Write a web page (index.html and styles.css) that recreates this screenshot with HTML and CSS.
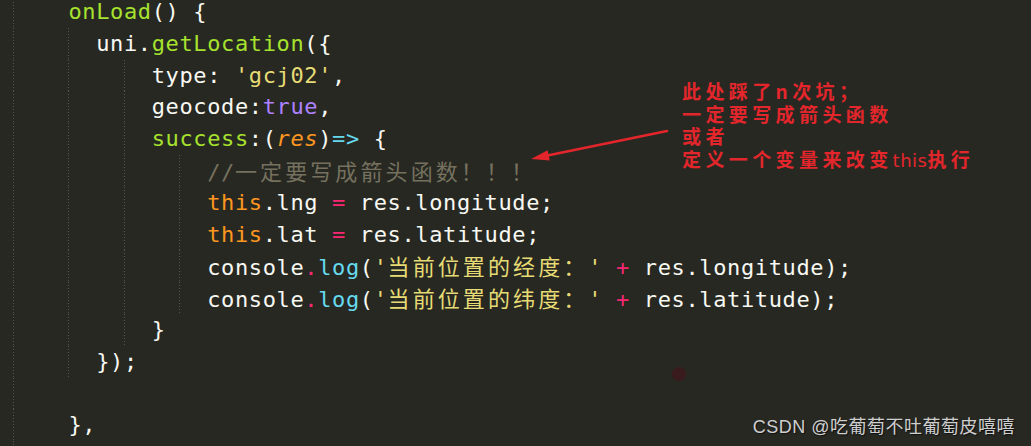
FILE: index.html
```html
<!DOCTYPE html>
<html lang="zh">
<head>
<meta charset="utf-8">
<title>onLoad getLocation</title>
<link rel="stylesheet" href="styles.css">
</head>
<body>
<div class="page">
  <div class="editor">
    <div class="line"><span class="g">    </span><span class="fn">onLoad</span>() {</div>
    <div class="line"><span class="g">    </span><span class="g">  </span>uni.<span class="fn">getLocation</span>({</div>
    <div class="line"><span class="g">    </span><span class="g">    </span><span class="g">  </span>type: <span class="str">'gcj02'</span>,</div>
    <div class="line"><span class="g">    </span><span class="g">    </span><span class="g">  </span>geocode:<span class="con">true</span>,</div>
    <div class="line"><span class="g">    </span><span class="g">    </span><span class="g">  </span><span class="fn">success</span>:(<span class="arg">res</span>)<span class="kw">=&gt;</span> {</div>
    <div class="line"><span class="g">    </span><span class="g">    </span><span class="g">    </span><span class="g">  </span><span class="cmt">//<span class="cjk">一定要写成箭头函数！！！</span></span></div>
    <div class="line"><span class="g">    </span><span class="g">    </span><span class="g">    </span><span class="g">  </span><span class="this">this</span>.lng <span class="op">=</span> res.longitude;</div>
    <div class="line"><span class="g">    </span><span class="g">    </span><span class="g">    </span><span class="g">  </span><span class="this">this</span>.lat <span class="op">=</span> res.latitude;</div>
    <div class="line"><span class="g">    </span><span class="g">    </span><span class="g">    </span><span class="g">  </span>console<span class="op">.</span><span class="kw">log</span>(<span class="str">'<span class="cjk">当前位置的经度：</span>'</span> <span class="op">+</span> res.longitude);</div>
    <div class="line"><span class="g">    </span><span class="g">    </span><span class="g">    </span><span class="g">  </span>console<span class="op">.</span><span class="kw">log</span>(<span class="str">'<span class="cjk">当前位置的纬度：</span>'</span> <span class="op">+</span> res.latitude);</div>
    <div class="line"><span class="g">    </span><span class="g">    </span><span class="g">  </span>}</div>
    <div class="line"><span class="g">    </span><span class="g">  </span>});</div>
    <div class="line"><span class="g">    </span></div>
    <div class="line"><span class="g">    </span>},</div>
    <div class="line"><span class="g">    </span></div>
  </div>

  <div class="note">
    <div class="note-line">此处踩了n次坑；</div>
    <div class="note-line">一定要写成箭头函数</div>
    <div class="note-line">或者</div>
    <div class="note-line">定义一个变量来改变<span class="note-latin">this</span>执行</div>
  </div>

  <svg class="arrow" width="1031" height="446" viewBox="0 0 1031 446" aria-hidden="true">
    <line x1="667" y1="131" x2="545" y2="156" stroke="#e3262b" stroke-width="2.6" stroke-linecap="round"/>
    <polygon points="531,159 547.6,150.3 549.8,160.4" fill="#e3262b"/>
  </svg>

  <div class="dot"></div>

  <div class="watermark">CSDN @吃葡萄不吐葡萄皮嘻嘻</div>
</div>
</body>
</html>
```

FILE: styles.css
```css
html, body {
  margin: 0;
  padding: 0;
  background: #272822;
}

.page {
  position: relative;
  width: 1031px;
  height: 446px;
  overflow: hidden;
  background: #272822;
}

.editor {
  margin-top: -4px;
  padding-left: 13px;
  font-family: "DejaVu Sans Mono", "Noto Sans CJK SC", monospace;
  font-size: 22px;
  letter-spacing: 0.625px;
  color: #f8f8f2;
}

.line {
  height: 31.8px;
  line-height: 31.8px;
  white-space: pre;
}

.g {
  display: inline-block;
  height: 31.8px;
  vertical-align: top;
  background-image: repeating-linear-gradient(to bottom, #55554c 0, #55554c 1px, transparent 1px, transparent 3px);
  background-size: 1px 100%;
  background-repeat: no-repeat;
  background-position: 0 0;
}

.fn { color: #a6e22e; }
.str { color: #e6db74; }
.con { color: #ae81ff; }
.arg { color: #fd971f; font-style: italic; }
.this { color: #fd971f; }
.kw { color: #66d9ef; }
.op { color: #f92672; }
.cmt { color: #75715e; }

.cjk {
  font-family: "Noto Sans CJK SC", sans-serif;
  letter-spacing: 3.1px;
}

.note {
  position: absolute;
  left: 682px;
  top: 80px;
  display: flex;
  flex-direction: column;
  font-family: "Noto Sans CJK SC", sans-serif;
  font-weight: 700;
  font-size: 19px;
  letter-spacing: 4.4px;
  color: #e3262b;
  white-space: nowrap;
}

.note-line {
  height: 22.7px;
  line-height: 22.7px;
}

.note-latin {
  font-family: "DejaVu Sans", sans-serif;
  font-weight: 400;
  font-size: 18px;
  letter-spacing: 0.5px;
}

.arrow {
  position: absolute;
  left: 0;
  top: 0;
}

.dot {
  position: absolute;
  left: 672px;
  top: 367px;
  width: 14px;
  height: 14px;
  border-radius: 50%;
  background: #3a1b1d;
}

.watermark {
  position: absolute;
  right: 16px;
  top: 417px;
  font-family: "Liberation Sans", "Noto Sans CJK SC", sans-serif;
  font-size: 18px;
  line-height: 20px;
  letter-spacing: 0.5px;
  color: #cfcfcf;
  text-shadow: 1px 1px 1px #111;
  white-space: nowrap;
}
```
